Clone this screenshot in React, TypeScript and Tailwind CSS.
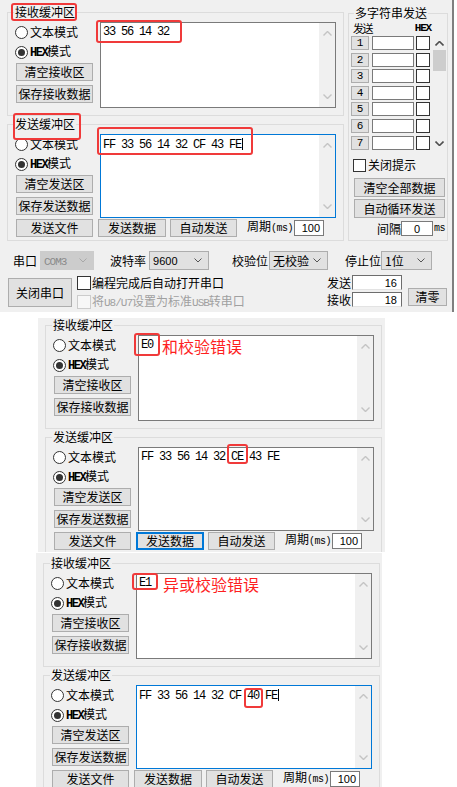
import type { ReactNode } from 'react';

const mono = "font-['Liberation_Mono',monospace]";

type WindowProps = {
  markTitles?: boolean;
  recv: ReactNode;
  send: ReactNode;
  sendFocus?: boolean;
  dataFocus?: boolean;
};

function Mark({ children, box }: { children: ReactNode; box: string }) {
  return (
    <span className="relative inline-block">
      {children}
      <span className={`pointer-events-none absolute rounded-[3px] border-2 border-[#f03a3a] ${box}`} />
    </span>
  );
}

function Caret() {
  return <span className="ml-[1px] inline-block h-[12px] w-[1px] translate-y-[2px] bg-black" />;
}

function Chevron({ down, dark }: { down?: boolean; dark?: boolean }) {
  return (
    <svg width="9" height="5" viewBox="0 0 9 5" className="block">
      <path
        d={down ? 'M0.5 0.5 4.5 4.5 8.5 0.5' : 'M0.5 4.5 4.5 0.5 8.5 4.5'}
        fill="none"
        stroke={dark ? '#505050' : '#c4c4c4'}
        strokeWidth={dark ? 1.6 : 1.4}
      />
    </svg>
  );
}

function Btn({ children, className = '', focus }: { children: ReactNode; className?: string; focus?: boolean }) {
  return (
    <button
      type="button"
      className={`flex items-center justify-center bg-[#e1e1e1] leading-[16px] ${
        focus ? 'border-2 border-[#0078d7]' : 'border border-[#adadad]'
      } ${className}`}
    >
      {children}
    </button>
  );
}

function Radio({ checked, children }: { checked?: boolean; children: ReactNode }) {
  return (
    <div className="-ml-[1px] flex h-[20px] items-center">
      <span className="flex h-[13px] w-[13px] items-center justify-center rounded-full border border-[#333333] bg-white">
        {checked ? <span className="h-[7px] w-[7px] rounded-full bg-[#333333]" /> : null}
      </span>
      <span className="ml-[2px]">{children}</span>
    </div>
  );
}

function TextBox({ focus, className, children }: { focus?: boolean; className: string; children: ReactNode }) {
  return (
    <div className={`flex border bg-white ${focus ? 'border-[#0078d7]' : 'border-[#7a7a7a]'} ${className}`}>
      <div className={`flex flex-1 items-start pl-[2px] pt-[1px] text-[12px] leading-[16px] ${mono}`}>{children}</div>
      <div className="flex w-[16px] flex-col items-center justify-between bg-[#f0f0f0] py-[8px]">
        <Chevron />
        <Chevron down />
      </div>
    </div>
  );
}

function ModeColumn({ clear, save }: { clear: string; save: string }) {
  return (
    <div className="flex w-[77px] flex-col pt-[2px]">
      <Radio>文本模式</Radio>
      <Radio checked>
        <span className={`text-[12px] font-bold tracking-[-1.5px] ${mono}`}>HEX</span>模式
      </Radio>
      <Btn className="mt-[1px] h-[18px] w-[77px]">{clear}</Btn>
      <Btn className="mt-[4px] h-[18px] w-[77px]">{save}</Btn>
    </div>
  );
}

function Select({ value, disabled, className }: { value: ReactNode; disabled?: boolean; className: string }) {
  return (
    <div
      className={`flex h-[19px] items-center border ${
        disabled ? 'border-[#cccccc] bg-[#cccccc] text-[#8a8a8a]' : 'border-[#adadad] bg-[#e1e1e1]'
      } ${className}`}
    >
      <span className="flex-1 pl-[3px]">{value}</span>
      <svg width="8" height="5" viewBox="0 0 8 5" className="mr-[6px] block">
        <path d="M0.5 0.5 4 4 7.5 0.5" fill="none" stroke={disabled ? '#a8a8a8' : '#555555'} strokeWidth="1" />
      </svg>
    </div>
  );
}

const rowGaps = ['mt-[1px]', 'mt-[3px]', 'mt-[2px]', 'mt-[3px]', 'mt-[2px]', 'mt-[3px]', 'mt-[3px]'];

function MultiSend() {
  return (
    <fieldset className="ml-[4px] mt-[1px] w-[100px] border border-[#dcdcdc]">
      <legend className="ml-[5px] px-[1px]">多字符串发送</legend>
      <div className="flex h-[14px] items-center pl-[4px] pr-[16px] text-[11px] leading-[12px]">
        <span className="tracking-[-1.5px]">发送</span>
        <span className={`ml-auto text-[11px] font-bold tracking-[-1.2px] ${mono}`}>HEX</span>
      </div>
      <div className="flex">
        <div className="flex flex-col pl-[2px]">
          {[1, 2, 3, 4, 5, 6, 7].map((n, i) => (
            <div key={n} className={`flex h-[14px] ${rowGaps[i]}`}>
              <span
                className={`flex w-[18px] items-center justify-center border border-[#adadad] bg-[#e1e1e1] text-[11px] leading-[12px] ${mono}`}
              >
                {n}
              </span>
              <span className="ml-[3px] w-[42px] border border-[#7a7a7a] bg-white" />
              <span className="ml-[2px] w-[14px] border border-[#333333] bg-white" />
            </div>
          ))}
        </div>
        <div className="ml-[2px] flex w-[14px] flex-col items-center pb-[4px] pt-[6px]">
          <Chevron dark />
          <span className="mt-[4px] h-[21px] w-[13px] bg-[#cdcdcd]" />
          <span className="mt-auto">
            <Chevron dark down />
          </span>
        </div>
      </div>
      <div className="mt-[7px] flex h-[16px] items-center pl-[4px]">
        <span className="h-[13px] w-[13px] border border-[#333333] bg-white" />
        <span className="ml-[2px]">关闭提示</span>
      </div>
      <Btn className="ml-[5px] mt-[5px] h-[19px] w-[91px]">清空全部数据</Btn>
      <Btn className="ml-[5px] mt-[2px] h-[19px] w-[91px]">自动循环发送</Btn>
      <div className="mt-[3px] flex h-[15px] items-center pl-[28px]">
        <span>间隔</span>
        <span className="flex h-[15px] w-[32px] items-center justify-center border border-[#7a7a7a] bg-white font-['Liberation_Sans'] text-[11px]">
          0
        </span>
        <span className={`ml-[1px] text-[10px] tracking-[-0.5px] ${mono}`}>ms</span>
      </div>
    </fieldset>
  );
}

function SerialWindow({ markTitles, recv, send, sendFocus, dataFocus }: WindowProps) {
  const recvTitle = markTitles ? (
    <Mark box="-left-[4px] -right-[2px] -top-[1px] -bottom-[1px]">接收缓冲区</Mark>
  ) : (
    '接收缓冲区'
  );
  const sendTitle = markTitles ? (
    <Mark box="-left-[2px] -right-[6px] -top-[3px] -bottom-[8px]">发送缓冲区</Mark>
  ) : (
    '发送缓冲区'
  );

  return (
    <div className="flex h-[312px] w-[454px] flex-col border-r-2 border-[#7f7f7f] bg-[#f0f0f0]">
      <div className="flex pt-[4px]">
        <div className="ml-[7px] flex w-[337px] flex-col">
          <fieldset className="border border-[#dcdcdc]">
            <legend className="ml-[6px] px-[1px]">{recvTitle}</legend>
            <div className="flex pb-[7px] pl-[8px]">
              <ModeColumn clear="清空接收区" save="保存接收数据" />
              <TextBox className="ml-[7px] mt-[2px] h-[86px] w-[236px]">{recv}</TextBox>
            </div>
          </fieldset>
          <fieldset className="border border-[#dcdcdc]">
            <legend className="ml-[6px] px-[1px]">{sendTitle}</legend>
            <div className="flex pl-[8px]">
              <ModeColumn clear="清空发送区" save="保存发送数据" />
              <TextBox focus={sendFocus} className="ml-[7px] mt-[2px] h-[84px] w-[236px]">
                {send}
              </TextBox>
            </div>
            <div className="flex items-center pb-[3px] pl-[8px]">
              <Btn className="h-[18px] w-[77px]">发送文件</Btn>
              <Btn focus={dataFocus} className="ml-[5px] h-[18px] w-[68px]">
                发送数据
              </Btn>
              <Btn className="ml-[4px] h-[18px] w-[67px]">自动发送</Btn>
              <span className="ml-[10px]">
                周期<span className={`text-[10px] tracking-[-0.5px] ${mono}`}>(ms)</span>
              </span>
              <span className="ml-[1px] flex h-[16px] w-[30px] items-center justify-end border border-[#7a7a7a] bg-white pr-[3px] font-['Liberation_Sans'] text-[11px]">
                100
              </span>
            </div>
          </fieldset>
        </div>
        <MultiSend />
      </div>

      <div className="mt-[10px] flex h-[19px] items-center">
        <span className="ml-[13px]">串口</span>
        <Select
          disabled
          value={<span className={`text-[11px] tracking-[-1px] ${mono}`}>COM3</span>}
          className="ml-[3px] w-[54px]"
        />
        <span className="ml-[16px]">波特率</span>
        <Select value={<span className="font-['Liberation_Sans'] text-[11px]">9600</span>} className="ml-[3px] w-[60px]" />
        <span className="ml-[23px]">校验位</span>
        <Select value="无校验" className="ml-[1px] w-[59px]" />
        <span className="ml-[17px]">停止位</span>
        <Select value="1位" className="w-[51px]" />
      </div>

      <div className="flex">
        <Btn className="ml-[8px] mt-[8px] h-[29px] w-[64px]">关闭串口</Btn>
        <div className="ml-[5px] mt-[5px] flex flex-col">
          <div className="flex h-[16px] items-center">
            <span className="h-[14px] w-[14px] border border-[#333333] bg-white" />
            <span className="ml-[1px]">编程完成后自动打开串口</span>
          </div>
          <div className="mt-[3px] flex h-[16px] items-center text-[#a0a0a0]">
            <span className="h-[14px] w-[14px] border border-[#cccccc] bg-[#f7f7f7]" />
            <span className="ml-[1px]">
              将<span className={`text-[11px] tracking-[-1px] ${mono}`}>U8/U7</span>设置为标准
              <span className={`text-[11px] tracking-[-1px] ${mono}`}>USB</span>转串口
            </span>
          </div>
        </div>
        <div className="ml-auto mr-[5px] mt-[5px] flex items-start">
          <div className="flex flex-col">
            <div className="flex h-[15px] items-center">
              <span>发送</span>
              <span className="ml-[1px] flex h-[15px] w-[50px] items-center justify-end border border-b-[#e3e3e3] border-l-[#6d6d6d] border-r-[#6d6d6d] border-t-[#6d6d6d] bg-white pr-[4px] font-['Liberation_Sans'] text-[11px]">
                16
              </span>
            </div>
            <div className="mt-[2px] flex h-[15px] items-center">
              <span>接收</span>
              <span className="ml-[1px] flex h-[15px] w-[50px] items-center justify-end border border-b-[#e3e3e3] border-l-[#6d6d6d] border-r-[#6d6d6d] border-t-[#6d6d6d] bg-white pr-[4px] font-['Liberation_Sans'] text-[11px]">
                18
              </span>
            </div>
          </div>
          <Btn className="ml-[6px] mt-[13px] h-[18px] w-[39px]">清零</Btn>
        </div>
      </div>
    </div>
  );
}

const redNote = "ml-[9px] mt-[1px] text-[16px] leading-[16px] tracking-normal text-[#fe1f1f] font-['Noto_Sans_CJK_SC',sans-serif]";

export default function App() {
  return (
    <div className="h-[787px] w-[457px] overflow-hidden bg-white font-['Noto_Sans_CJK_SC','Noto_Sans',sans-serif] text-[12px] leading-[16px] text-black">
      <SerialWindow
        markTitles
        sendFocus
        recv={
          <span className="tracking-[-1.2px]">
            <Mark box="-left-[7px] -right-[13px] -top-[4px] -bottom-[3px]">33 56 14 32</Mark>
          </span>
        }
        send={
          <span className="tracking-[-1.2px]">
            <Mark box="-left-[6px] -right-[10px] -top-[9px] -bottom-[2px]">
              FF 33 56 14 32 CF 43 FE
              <Caret />
            </Mark>
          </span>
        }
      />

      <div className="ml-[38px] mt-[6px] h-[234px] w-[347px] overflow-hidden">
        <div className="-mt-[5px]">
          <SerialWindow
            dataFocus
            recv={
              <>
                <span className="tracking-[-1.2px]">
                  <Mark box="-left-[7px] -right-[7px] -top-[4px] -bottom-[3px]">E0</Mark>
                </span>
                <span className={redNote}>和校验错误</span>
              </>
            }
            send={
              <span className="whitespace-pre tracking-[-1.2px]">
                FF 33 56 14 32 <Mark box="-left-[4px] -right-[5px] -top-[5px] bottom-[1px]">CE</Mark> 43 FE
              </span>
            }
          />
        </div>
      </div>

      <div className="ml-[36px] mt-[1px] h-[234px] w-[346px] overflow-hidden">
        <div className="-mt-[2px]">
          <SerialWindow
            sendFocus
            recv={
              <>
                <span className="tracking-[-1.2px]">
                  <Mark box="-left-[7px] -right-[7px] -top-[2px] bottom-[1px]">E1</Mark>
                </span>
                <span className={`${redNote} !ml-[12px]`}>异或校验错误</span>
              </>
            }
            send={
              <span className="whitespace-pre tracking-[-1.2px]">
                FF 33 56 14 32 CF <Mark box="-left-[3px] -right-[4px] top-0 -bottom-[4px]">40</Mark> FE
                <Caret />
              </span>
            }
          />
        </div>
      </div>
    </div>
  );
}
